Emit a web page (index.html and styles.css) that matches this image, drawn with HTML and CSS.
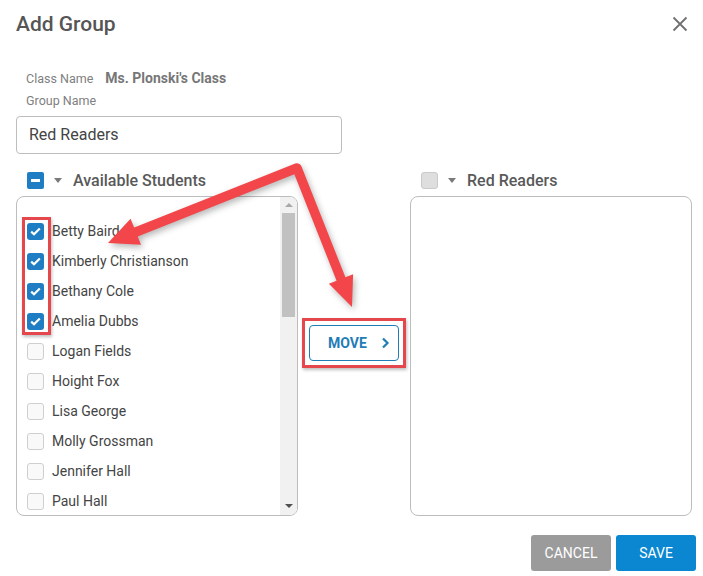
FILE: index.html
```html
<!DOCTYPE html>
<html>
<head>
<meta charset="utf-8">
<link rel="stylesheet" href="styles.css">
</head>
<body>
<div class="dialog">
  <header class="head">
    <h1 class="title">Add Group</h1>
    <button class="close" aria-label="Close">
      <svg width="16" height="16" viewBox="0 0 16 16"><path d="M1.5 1.5 L14.5 14.5 M14.5 1.5 L1.5 14.5" stroke="#707070" stroke-width="1.8" fill="none"/></svg>
    </button>
  </header>

  <div class="info">
    <div class="class-row"><span class="lbl">Class Name</span><span class="classname">Ms. Plonski's Class</span></div>
    <div class="lbl group-lbl">Group Name</div>
  </div>

  <div class="input">Red Readers</div>

  <div class="lists">
    <div class="col">
      <div class="colhead">
        <span class="cb cb-ind"><span class="bar"></span></span>
        <span class="caret"></span>
        <span class="coltitle">Available Students</span>
      </div>
      <div class="box">
        <ul class="items">
          <li class="item"><span class="cb cb-on"><svg width="11" height="9" viewBox="0 0 11 9"><path d="M1.2 4.6 L4 7.3 L9.8 1.4" stroke="#fff" stroke-width="2.2" fill="none"/></svg></span>Betty Baird</li>
          <li class="item"><span class="cb cb-on"><svg width="11" height="9" viewBox="0 0 11 9"><path d="M1.2 4.6 L4 7.3 L9.8 1.4" stroke="#fff" stroke-width="2.2" fill="none"/></svg></span>Kimberly Christianson</li>
          <li class="item"><span class="cb cb-on"><svg width="11" height="9" viewBox="0 0 11 9"><path d="M1.2 4.6 L4 7.3 L9.8 1.4" stroke="#fff" stroke-width="2.2" fill="none"/></svg></span>Bethany Cole</li>
          <li class="item"><span class="cb cb-on"><svg width="11" height="9" viewBox="0 0 11 9"><path d="M1.2 4.6 L4 7.3 L9.8 1.4" stroke="#fff" stroke-width="2.2" fill="none"/></svg></span>Amelia Dubbs</li>
          <li class="item"><span class="cb cb-off"></span>Logan Fields</li>
          <li class="item"><span class="cb cb-off"></span>Hoight Fox</li>
          <li class="item"><span class="cb cb-off"></span>Lisa George</li>
          <li class="item"><span class="cb cb-off"></span>Molly Grossman</li>
          <li class="item"><span class="cb cb-off"></span>Jennifer Hall</li>
          <li class="item"><span class="cb cb-off"></span>Paul Hall</li>
        </ul>
        <div class="scrollbar">
          <span class="sb-up"></span>
          <span class="sb-thumb"></span>
          <span class="sb-fill"></span>
          <span class="sb-down"></span>
        </div>
      </div>
    </div>

    <div class="mid">
      <button class="move">MOVE
        <svg width="9" height="12" viewBox="0 0 9 12"><path d="M2 1.5 L6.5 6 L2 10.5" stroke="#1f7db8" stroke-width="2.2" fill="none"/></svg>
      </button>
    </div>

    <div class="col">
      <div class="colhead">
        <span class="cb cb-dis"></span>
        <span class="caret"></span>
        <span class="coltitle">Red Readers</span>
      </div>
      <div class="box box-empty"></div>
    </div>
  </div>

  <footer class="foot">
    <button class="btn btn-cancel">CANCEL</button>
    <button class="btn btn-save">SAVE</button>
  </footer>

  <span class="hl hl-checks"></span>
  <span class="hl hl-move"></span>

  <svg class="arrows" width="703" height="576" viewBox="0 0 703 576">
    <polyline points="136,232 297,168 341,279" stroke="#f2464a" stroke-width="9.5" fill="none" stroke-linejoin="round" stroke-linecap="round"/>
    <polygon points="108,243 130.6,218.8 141,244.8" fill="#f2464a"/>
    <polygon points="352,307 328.9,283.8 353.1,274.2" fill="#f2464a"/>
  </svg>
</div>
</body>
</html>
```

FILE: styles.css
```css
* { box-sizing: border-box; }
html, body { margin: 0; padding: 0; background: #fff; }
body { font-family: Roboto, "Liberation Sans", Arial, sans-serif; color: #444; }
ul { list-style: none; margin: 0; padding: 0; }
button { font-family: inherit; border: 0; background: none; padding: 0; cursor: pointer; }

.dialog {
  position: relative;
  width: 703px;
  height: 576px;
  padding: 12px 7px 0 16px;
  overflow: hidden;
}

.head {
  display: flex;
  justify-content: space-between;
  align-items: center;
  height: 24px;
}
.title {
  margin: 0;
  font-size: 21px;
  line-height: 24px;
  font-weight: 500;
  color: #555;
}
.close {
  width: 16px;
  height: 16px;
  margin-right: 8px;
  margin-top: -1px;
  display: flex;
}

.info {
  padding-left: 10px;
  margin-top: 32px;
}
.class-row {
  display: flex;
  align-items: baseline;
  gap: 12px;
  height: 20px;
  line-height: 20px;
}
.lbl {
  font-size: 12.5px;
  color: #808080;
}
.classname {
  font-size: 14px;
  font-weight: 700;
  color: #777;
}
.group-lbl {
  line-height: 16px;
  margin-top: 5px;
}

.input {
  margin-top: 7px;
  width: 326px;
  height: 38px;
  border: 1px solid #bdbdbd;
  border-radius: 4px;
  padding-left: 12px;
  font-size: 16px;
  line-height: 36px;
  color: #444;
}

.lists {
  display: flex;
  margin-top: 12px;
}
.col {
  width: 282px;
  display: flex;
  flex-direction: column;
}
.colhead {
  display: flex;
  align-items: center;
  height: 28px;
  padding-left: 11px;
  margin-bottom: 2px;
}
.coltitle {
  font-size: 16px;
  font-weight: 500;
  color: #595959;
  margin-left: 11px;
}
.caret {
  width: 0;
  height: 0;
  border-left: 4.5px solid transparent;
  border-right: 4.5px solid transparent;
  border-top: 5px solid #7a7a7a;
  margin-left: 10px;
}

.cb {
  width: 17px;
  height: 17px;
  border-radius: 3px;
  flex: none;
  display: flex;
  align-items: center;
  justify-content: center;
}
.cb-ind { background: #1e7dc3; border-radius: 2px; }
.cb-ind .bar { width: 9px; height: 3px; background: #fff; }
.cb-on { background: #1e7dc3; }
.cb-off { border: 1px solid #cfcfcf; background: #f9f9f9; }
.cb-dis { border: 1px solid #cacaca; background: #dedede; }

.box {
  height: 320px;
  border: 1px solid #bdbdbd;
  border-radius: 8px;
  display: flex;
  overflow: hidden;
}
.items {
  flex: 1;
  padding: 19px 0 0 10px;
}
.item {
  display: flex;
  align-items: center;
  gap: 8px;
  height: 30px;
  font-size: 14px;
  color: #444;
}

.scrollbar {
  width: 17px;
  background: #f1f1f1;
  display: flex;
  flex-direction: column;
  align-items: center;
}
.sb-up {
  margin-top: 6px;
  width: 0;
  height: 0;
  border-left: 4px solid transparent;
  border-right: 4px solid transparent;
  border-bottom: 4px solid #a8a8a8;
}
.sb-thumb {
  margin-top: 6px;
  width: 13px;
  height: 104px;
  background: #c1c1c1;
}
.sb-fill { flex: 1; }
.sb-down {
  width: 0;
  height: 0;
  border-left: 4px solid transparent;
  border-right: 4px solid transparent;
  border-top: 4px solid #505050;
  margin-bottom: 7px;
}

.mid {
  width: 112px;
  display: flex;
  justify-content: center;
  padding-top: 159px;
}
.move {
  width: 90px;
  height: 36px;
  border: 1px solid #1f7db8;
  border-radius: 4px;
  color: #1f7db8;
  font-size: 14px;
  font-weight: 700;
  display: flex;
  align-items: center;
  justify-content: center;
  gap: 14px;
  padding-left: 10px;
}

.foot {
  display: flex;
  justify-content: flex-end;
  gap: 5px;
  margin-top: 19px;
}
.btn {
  width: 80px;
  height: 36px;
  border-radius: 3px;
  color: #fff;
  font-size: 14px;
}
.btn-cancel { background: #9b9b9b; }
.btn-save { background: #0a87d0; }

.hl {
  position: absolute;
  border: 3px solid #e4474c;
  box-shadow: 1px 2px 3px rgba(0,0,0,0.25);
}
.hl-checks { left: 22px; top: 217px; width: 29px; height: 118px; }
.hl-move { left: 302px; top: 318px; width: 104px; height: 50px; }

.arrows {
  position: absolute;
  left: 0;
  top: 0;
  pointer-events: none;
  filter: drop-shadow(2px 3px 3px rgba(0,0,0,0.28));
}
```
